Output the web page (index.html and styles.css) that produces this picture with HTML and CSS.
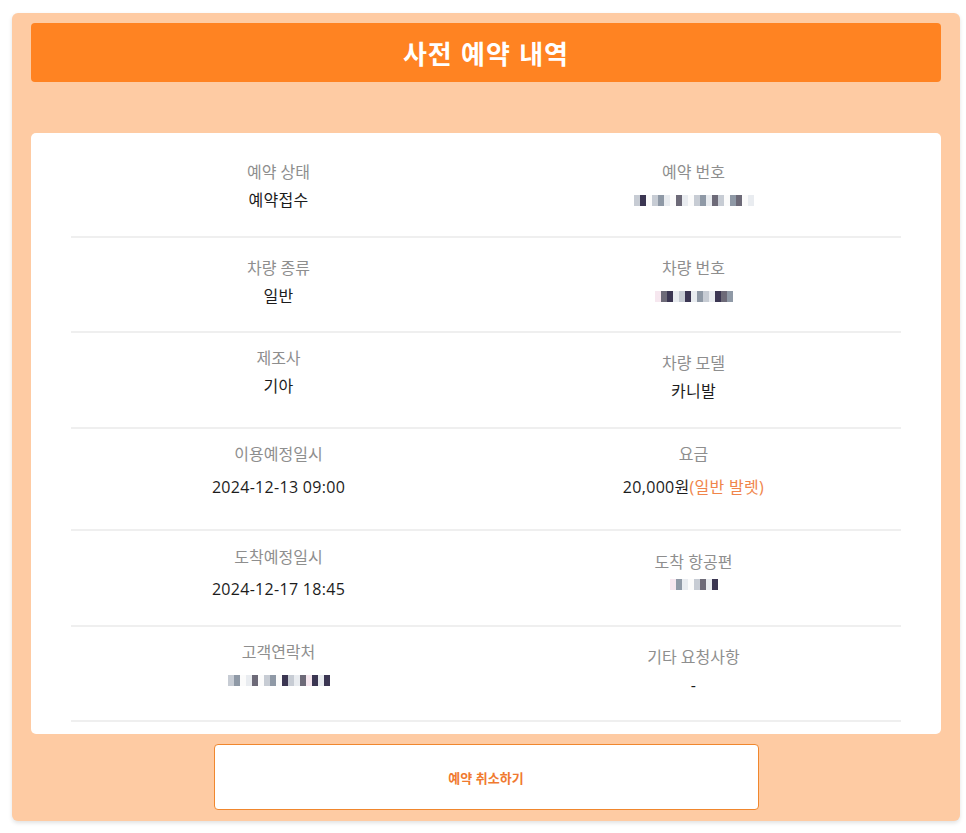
FILE: index.html
```html
<!DOCTYPE html>
<html lang="ko">
<head>
<meta charset="utf-8">
<title>사전 예약 내역</title>
<link rel="stylesheet" href="styles.css">
</head>
<body>
<div class="panel">
  <header class="head"><h1>사전 예약 내역</h1></header>
  <section class="card">
    <div class="row r1">
      <div class="cell"><span class="label">예약 상태</span><span class="value">예약접수</span></div>
      <div class="cell"><span class="label">예약 번호</span><span class="value"><span class="blur"><i class="a"></i><i class="b"></i><i class="n"></i><i class="a"></i><i class="c"></i><i class="d"></i><i class="n"></i><i class="e"></i><i class="d"></i><i class="n"></i><i class="a"></i><i class="c"></i><i class="d"></i><i class="e"></i><i class="a"></i><i class="n"></i><i class="c"></i><i class="e"></i><i class="n"></i><i class="d"></i></span></span></div>
    </div>
    <div class="row">
      <div class="cell low"><span class="label">차량 종류</span><span class="value">일반</span></div>
      <div class="cell low"><span class="label">차량 번호</span><span class="value"><span class="blur"><i class="f"></i><i class="e"></i><i class="b"></i><i class="d"></i><i class="a"></i><i class="b"></i><i class="d"></i><i class="c"></i><i class="a"></i><i class="d"></i><i class="b"></i><i class="e"></i><i class="c"></i></span></span></div>
    </div>
    <div class="row r3">
      <div class="cell"><span class="label">제조사</span><span class="value">기아</span></div>
      <div class="cell low"><span class="label">차량 모델</span><span class="value">카니발</span></div>
    </div>
    <div class="row r4">
      <div class="cell"><span class="label">이용예정일시</span><span class="value far">2024-12-13 09:00</span></div>
      <div class="cell"><span class="label">요금</span><span class="value far">20,000원<em class="note">(일반 발렛)</em></span></div>
    </div>
    <div class="row r5">
      <div class="cell"><span class="label">도착예정일시</span><span class="value mid">2024-12-17 18:45</span></div>
      <div class="cell low"><span class="label">도착 항공편</span><span class="value near"><span class="blur"><i class="f"></i><i class="c"></i><i class="d"></i><i class="n"></i><i class="a"></i><i class="e"></i><i class="d"></i><i class="b"></i></span></span></div>
    </div>
    <div class="row">
      <div class="cell"><span class="label">고객연락처</span><span class="value"><span class="blur"><i class="a"></i><i class="c"></i><i class="n"></i><i class="d"></i><i class="e"></i><i class="n"></i><i class="a"></i><i class="c"></i><i class="n"></i><i class="b"></i><i class="a"></i><i class="d"></i><i class="e"></i><i class="f"></i><i class="b"></i><i class="d"></i><i class="b"></i></span></span></div>
      <div class="cell low"><span class="label">기타 요청사항</span><span class="value">-</span></div>
    </div>
  </section>
  <div class="actions"><button class="cancel" type="button">예약 취소하기</button></div>
</div>
</body>
</html>
```
FILE: styles.css
```css
html, body {
  margin: 0;
  padding: 0;
  background: #ffffff;
  font-family: "Open Sans", "Noto Sans CJK KR", sans-serif;
}

.panel {
  margin: 13px 6px 12px 12px;
  padding: 10px 19px 11px 19px;
  background: #fecba3;
  border-radius: 6px;
  box-shadow: 0 2px 4px rgba(0, 0, 0, 0.12);
}

.head {
  height: 59px;
  background: #ff8322;
  border-radius: 4px;
  display: flex;
  align-items: center;
  justify-content: center;
}

.head h1 {
  margin: 0;
  color: #ffffff;
  font-family: "Noto Sans CJK KR", sans-serif;
  font-size: 26px;
  font-weight: 700;
  letter-spacing: 1px;
  line-height: 1;
}

.card {
  margin-top: 51px;
  background: #ffffff;
  border-radius: 5px;
  padding: 10px 40px 12px 40px;
}

.row {
  display: grid;
  grid-template-columns: 1fr 1fr;
  height: 95px;
  box-sizing: border-box;
  padding-top: 11px;
  border-bottom: 2px solid #efefef;
}

.row.r1 { padding-top: 15px; }
.row.r3 { height: 96px; }
.row.r4 { height: 102px; }
.row.r5 { height: 96px; padding-top: 12px; }

.cell {
  display: flex;
  flex-direction: column;
  align-items: center;
}

.cell.low { padding-top: 5px; }

.label {
  font-size: 16px;
  line-height: 28px;
  color: #8e8e8e;
  font-weight: 400;
}

.value {
  font-size: 16px;
  line-height: 28px;
  color: #1c1c1c;
  font-weight: 400;
  letter-spacing: 0.3px;
  display: flex;
  align-items: center;
  height: 28px;
}

.value.far { margin-top: 5px; }
.value.mid { margin-top: 4px; }
.value.near { margin-top: -6px; }

.note {
  font-style: normal;
  color: #f0854a;
}

.blur {
  display: inline-flex;
  height: 11px;
}

.blur i {
  display: block;
  width: 6px;
  height: 11px;
}

.blur i.a { background: #c7ccd4; }
.blur i.b { background: #3b3652; }
.blur i.c { background: #8f99a6; }
.blur i.d { background: #e9ecf0; }
.blur i.e { background: #6d6a78; }
.blur i.f { background: #f6e7ef; }
.blur i.n { background: #fbfbfb; }

.actions {
  display: flex;
  justify-content: center;
  margin-top: 10px;
}

.cancel {
  width: 545px;
  height: 66px;
  background: #ffffff;
  border: 1px solid #f0872e;
  border-radius: 4px;
  color: #f07a30;
  font-family: "Noto Sans CJK KR", sans-serif;
  font-size: 13px;
  font-weight: 700;
  cursor: pointer;
}
```
